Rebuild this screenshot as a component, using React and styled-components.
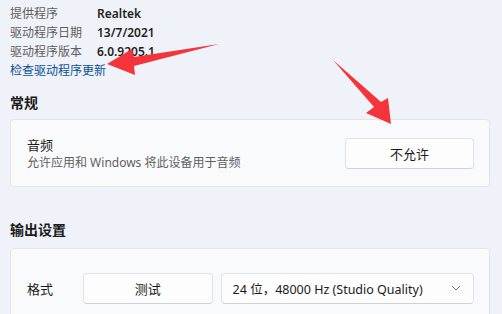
import React from "react";
import styled, { createGlobalStyle } from "styled-components";

const GlobalStyle = createGlobalStyle`
  body {
    margin: 0;
    background: #eff2f8;
    font-family: "Noto Sans", "Noto Sans CJK SC", sans-serif;
    color: #1b1b1b;
  }
`;

const Page = styled.div`
  position: relative;
  width: 502px;
  height: 314px;
  overflow: hidden;
  padding: 4px 12px 0 10px;
  box-sizing: border-box;
`;

const InfoGrid = styled.div`
  display: grid;
  grid-template-columns: 87px auto;
  font-size: 12px;
  line-height: 19px;
`;

const Label = styled.div`
  color: #5e5e5e;
`;

const Value = styled.div`
  font-weight: 600;
  color: #1f1f1f;
`;

const Link = styled.a`
  display: block;
  font-size: 12px;
  line-height: 19px;
  color: #0a4f96;
  text-decoration: none;
`;

const Heading = styled.h2`
  margin: ${(p) => p.$top}px 0 ${(p) => p.$bottom}px;
  font-size: 14px;
  line-height: 20px;
  font-weight: 600;
`;

const Card = styled.div`
  display: flex;
  align-items: center;
  gap: ${(p) => p.$gap || 0}px;
  background: #f9fafc;
  border: 1px solid #e3e5ea;
  border-radius: 4px;
  padding: 0 15px 0 16px;
  height: ${(p) => p.$height}px;
  box-sizing: border-box;
`;

const TextBlock = styled.div`
  flex: 1;
  padding-top: 2px;
`;

const Title = styled.div`
  font-size: 13px;
  line-height: 18px;
`;

const Sub = styled.div`
  font-size: 12px;
  line-height: 18px;
  color: #5f5f5f;
`;

const Button = styled.button`
  width: ${(p) => p.$width}px;
  height: 31px;
  background: #fdfdfd;
  border: 1px solid #e2e2e2;
  border-bottom-color: #d2d2d2;
  border-radius: 4px;
  font-family: inherit;
  font-size: 13px;
  color: #1b1b1b;
`;

const FieldLabel = styled.div`
  font-size: 13px;
  width: 48px;
`;

const Select = styled.div`
  display: flex;
  align-items: center;
  justify-content: space-between;
  width: 254px;
  height: 31px;
  box-sizing: border-box;
  padding: 0 12px 0 11px;
  background: #fdfdfd;
  border: 1px solid #e2e2e2;
  border-bottom-color: #d2d2d2;
  border-radius: 4px;
  font-size: 12.5px;
`;

const Arrow = styled.svg`
  position: absolute;
  left: 0;
  top: 0;
  pointer-events: none;
`;

export default function App() {
  return (
    <Page>
      <GlobalStyle />
      <InfoGrid>
        <Label>提供程序</Label>
        <Value>Realtek</Value>
        <Label>驱动程序日期</Label>
        <Value>13/7/2021</Value>
        <Label>驱动程序版本</Label>
        <Value>6.0.9205.1</Value>
      </InfoGrid>
      <Link href="#">检查驱动程序更新</Link>

      <Heading $top={13} $bottom={6}>常规</Heading>
      <Card $height={68}>
        <TextBlock>
          <Title>音频</Title>
          <Sub>允许应用和 Windows 将此设备用于音频</Sub>
        </TextBlock>
        <Button $width={129}>不允许</Button>
      </Card>

      <Heading $top={33} $bottom={8}>输出设置</Heading>
      <Card $height={80} $gap={8}>
        <FieldLabel>格式</FieldLabel>
        <Button $width={130}>测试</Button>
        <Select>
          <span>24 位，48000 Hz (Studio Quality)</span>
          <svg width="10" height="6" viewBox="0 0 10 6">
            <path d="M1 1l4 4 4-4" fill="none" stroke="#777" strokeWidth="1" />
          </svg>
        </Select>
      </Card>

      <Arrow width="502" height="314" viewBox="0 0 502 314">
        <path
          d="M219 44 L134 57 L132 49 L107 64 L135 75 L134 66 Z"
          fill="#f5333a"
        />
        <path
          d="M333 60 L374 107 L366 113 L391 124 L388 98 L381 102 Z"
          fill="#f5333a"
        />
      </Arrow>
    </Page>
  );
}
